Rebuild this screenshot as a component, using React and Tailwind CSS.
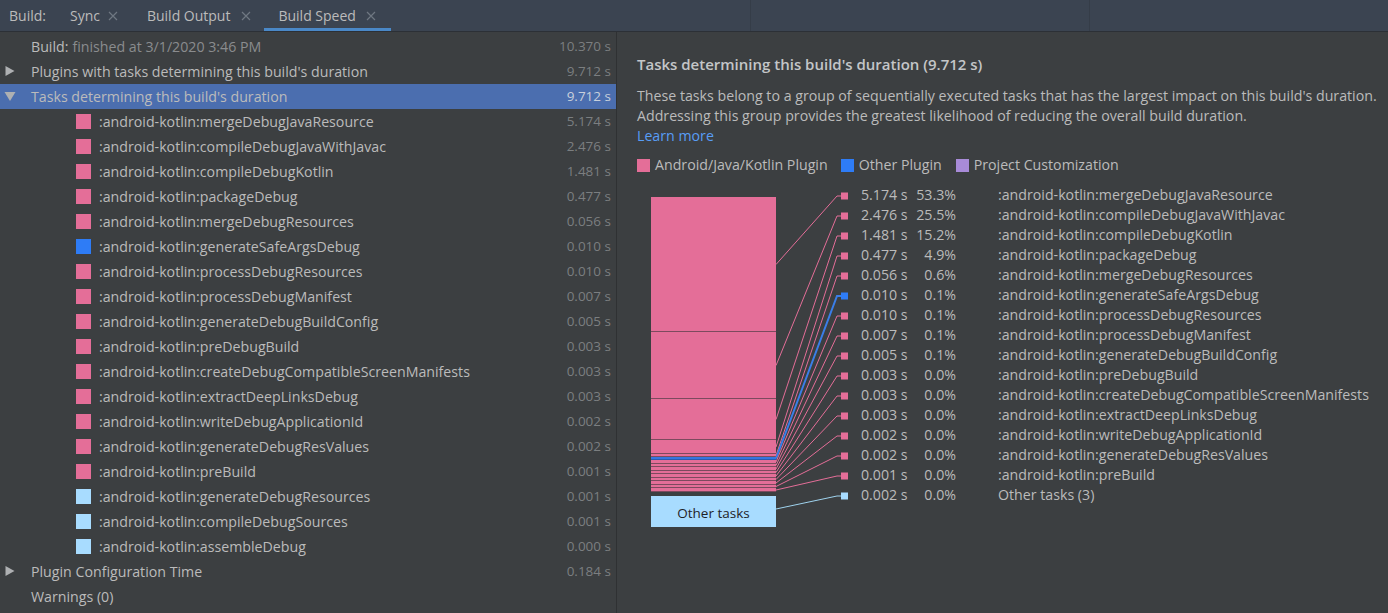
import React from "react";

const PINK = "#e46e98";
const BLUE = "#2e7cf6";
const LBLUE = "#a8dcff";

const tasks = [
  ["mergeDebugJavaResource", "5.174", "53.3%", PINK],
  ["compileDebugJavaWithJavac", "2.476", "25.5%", PINK],
  ["compileDebugKotlin", "1.481", "15.2%", PINK],
  ["packageDebug", "0.477", "4.9%", PINK],
  ["mergeDebugResources", "0.056", "0.6%", PINK],
  ["generateSafeArgsDebug", "0.010", "0.1%", BLUE],
  ["processDebugResources", "0.010", "0.1%", PINK],
  ["processDebugManifest", "0.007", "0.1%", PINK],
  ["generateDebugBuildConfig", "0.005", "0.1%", PINK],
  ["preDebugBuild", "0.003", "0.0%", PINK],
  ["createDebugCompatibleScreenManifests", "0.003", "0.0%", PINK],
  ["extractDeepLinksDebug", "0.003", "0.0%", PINK],
  ["writeDebugApplicationId", "0.002", "0.0%", PINK],
  ["generateDebugResValues", "0.002", "0.0%", PINK],
  ["preBuild", "0.001", "0.0%", PINK],
  ["generateDebugResources", "0.001", "", LBLUE],
  ["compileDebugSources", "0.001", "", LBLUE],
  ["assembleDebug", "0.000", "", LBLUE],
];

const chartRows = [
  ...tasks.slice(0, 15).map((t) => ({ name: ":android-kotlin:" + t[0], time: t[1], pct: t[2], color: t[3] })),
  { name: "Other tasks (3)", time: "0.002", pct: "0.0%", color: LBLUE },
];

// segment boundaries in svg coords (svg top at page y=186)
const bounds = [197, 332, 399, 440, 454, 457, 460, 464, 467, 471, 474, 478, 481, 485, 488, 492].map((v) => v - 186);

function Close() {
  return (
    <svg width="10" height="10" viewBox="0 0 10 10" className="shrink-0">
      <path d="M1 1L9 9M9 1L1 9" stroke="#6f7782" strokeWidth="1.2" />
    </svg>
  );
}

function Arrow({ down }) {
  return (
    <svg width="12" height="12" viewBox="0 0 12 12" className="shrink-0">
      {down ? <path d="M0.5 2H11.5L6 11Z" fill="#aeb0b2" /> : <path d="M1.5 1V11L10.5 6Z" fill="#aeb0b2" />}
    </svg>
  );
}

function Row({ children, time, selected, className = "" }) {
  return (
    <div className={"flex h-[25px] items-center pr-[5px] " + (selected ? "bg-[#4b6eaf] " : "") + className}>
      <div className="flex min-w-0 flex-1 items-center whitespace-nowrap">{children}</div>
      {time && (
        <div className={"shrink-0 text-[13.5px] " + (selected ? "text-[#c8d0dc]" : "text-[#7b7e80]")}>{time}</div>
      )}
    </div>
  );
}

function Chart() {
  const segs = [];
  for (let i = 0; i < 15; i++) {
    segs.push({ y0: bounds[i], y1: bounds[i + 1], color: tasks[i][3] });
  }
  return (
    <svg width="212" height="345" viewBox="0 0 212 345" className="shrink-0">
      {segs.map((s, i) => (
        <g key={i}>
          <rect x="14" y={s.y0} width="125" height={s.y1 - s.y0} fill={s.color === BLUE ? "#3476e0" : s.color} />
          <rect x="14" y={s.y1 - 1} width="125" height="1" fill={s.color === BLUE ? "#2a5ab0" : "#7d4a5e"} />
        </g>
      ))}
      <rect x="14" y="310" width="125" height="31" fill={LBLUE} />
      <text x="76.5" y="331.5" textAnchor="middle" fontSize="13.5" fill="#1f2226" fontFamily="Open Sans, sans-serif">
        Other tasks
      </text>
      {segs.map((s, i) => {
        const mid = (s.y0 + s.y1) / 2;
        const ry = 10 + 20 * i;
        const c = s.color === BLUE ? "#3a7ee8" : PINK;
        return (
          <polyline
            key={"l" + i}
            points={`139,${mid} 200,${ry} 204,${ry}`}
            fill="none"
            stroke={c}
            strokeWidth={s.color === BLUE ? 2 : 1}
          />
        );
      })}
      <polyline points="139,323 200,310 204,310" fill="none" stroke="#9fd3ee" strokeWidth="1" />
      {chartRows.map((r, i) => (
        <rect key={"q" + i} x="204" y={10 + 20 * i - 3.5} width="7" height="7" fill={r.color} />
      ))}
    </svg>
  );
}

export default function App() {
  return (
    <div className="flex h-[613px] w-[1388px] flex-col overflow-hidden bg-[#3c3f41] font-['Open_Sans',sans-serif] text-[14.2px] text-[#bbbbbb]">
      {/* Tab bar */}
      <div className="flex h-[32px] shrink-0 items-stretch border-b border-[#2c3036] bg-[#3b4451] text-[14px]">
        <div className="flex items-center pl-[9px] pr-[11px]">Build:</div>
        <div className="flex items-center gap-[8px] pl-[13px] pr-[13px]">
          <span>Sync</span>
          <Close />
        </div>
        <div className="flex items-center gap-[11px] pl-[16px] pr-[13px]">
          <span>Build Output</span>
          <Close />
        </div>
        <div className="flex items-center gap-[10px] border-b-[3px] border-[#4a88c7] pl-[14px] pr-[15px] pt-[3px]">
          <span>Build Speed</span>
          <Close />
        </div>
        <div className="flex-1" />
        <div className="w-[339px] border-l border-[#353d48]" />
        <div className="w-[299px] border-l border-[#353d48]" />
      </div>

      <div className="flex min-h-0 flex-1">
        {/* Left tree */}
        <div className="w-[617px] shrink-0 border-r border-[#2f3133] pt-[2px]">
          <Row time="10.370 s">
            <span className="pl-[31px]">Build:</span>
            <span className="pl-[4px] text-[#8a8c8e]">finished at 3/1/2020 3:46 PM</span>
          </Row>
          <Row time="9.712 s">
            <span className="pl-[4px] pr-[15px]">
              <Arrow />
            </span>
            <span>Plugins with tasks determining this build's duration</span>
          </Row>
          <Row time="9.712 s" selected>
            <span className="pl-[4px] pr-[15px]">
              <Arrow down />
            </span>
            <span>Tasks determining this build's duration</span>
          </Row>
          {tasks.map((t) => (
            <Row key={t[0]} time={t[1] + " s"}>
              <span className="ml-[76px] mr-[8px] h-[15px] w-[15px] shrink-0" style={{ background: t[3] }} />
              <span>:android-kotlin:{t[0]}</span>
            </Row>
          ))}
          <Row time="0.184 s">
            <span className="pl-[4px] pr-[15px]">
              <Arrow />
            </span>
            <span>Plugin Configuration Time</span>
          </Row>
          <Row>
            <span className="pl-[31px]">Warnings (0)</span>
          </Row>
        </div>

        {/* Right details */}
        <div className="min-w-0 flex-1 whitespace-nowrap pl-[20px] pt-[22px]">
          <div className="text-[15px] font-semibold leading-[20px] text-[#c4c6c8]">
            Tasks determining this build's duration (9.712 s)
          </div>
          <div className="mt-[12px] leading-[20px]">
            <div>These tasks belong to a group of sequentially executed tasks that has the largest impact on this build's duration.</div>
            <div>Addressing this group provides the greatest likelihood of reducing the overall build duration.</div>
            <div className="text-[#589df6]">Learn more</div>
          </div>
          <div className="mt-[9px] flex h-[20px] items-center">
            <span className="h-[13px] w-[13px] bg-[#e46e98]" />
            <span className="ml-[5px]">Android/Java/Kotlin Plugin</span>
            <span className="ml-[13px] h-[13px] w-[13px] bg-[#2e7cf6]" />
            <span className="ml-[5px]">Other Plugin</span>
            <span className="ml-[14px] h-[13px] w-[13px] bg-[#a88bd8]" />
            <span className="ml-[5px]">Project Customization</span>
          </div>
          <div className="mt-[11px] flex">
            <Chart />
            <div className="-mt-[1px] pl-[12px]">
              {chartRows.map((r) => (
                <div key={r.name} className="flex h-[20px] items-center">
                  <span className="w-[50px]">{r.time} s</span>
                  <span className="w-[45px] text-right">{r.pct}</span>
                  <span className="ml-[42px]">{r.name}</span>
                </div>
              ))}
            </div>
          </div>
        </div>
      </div>
    </div>
  );
}
